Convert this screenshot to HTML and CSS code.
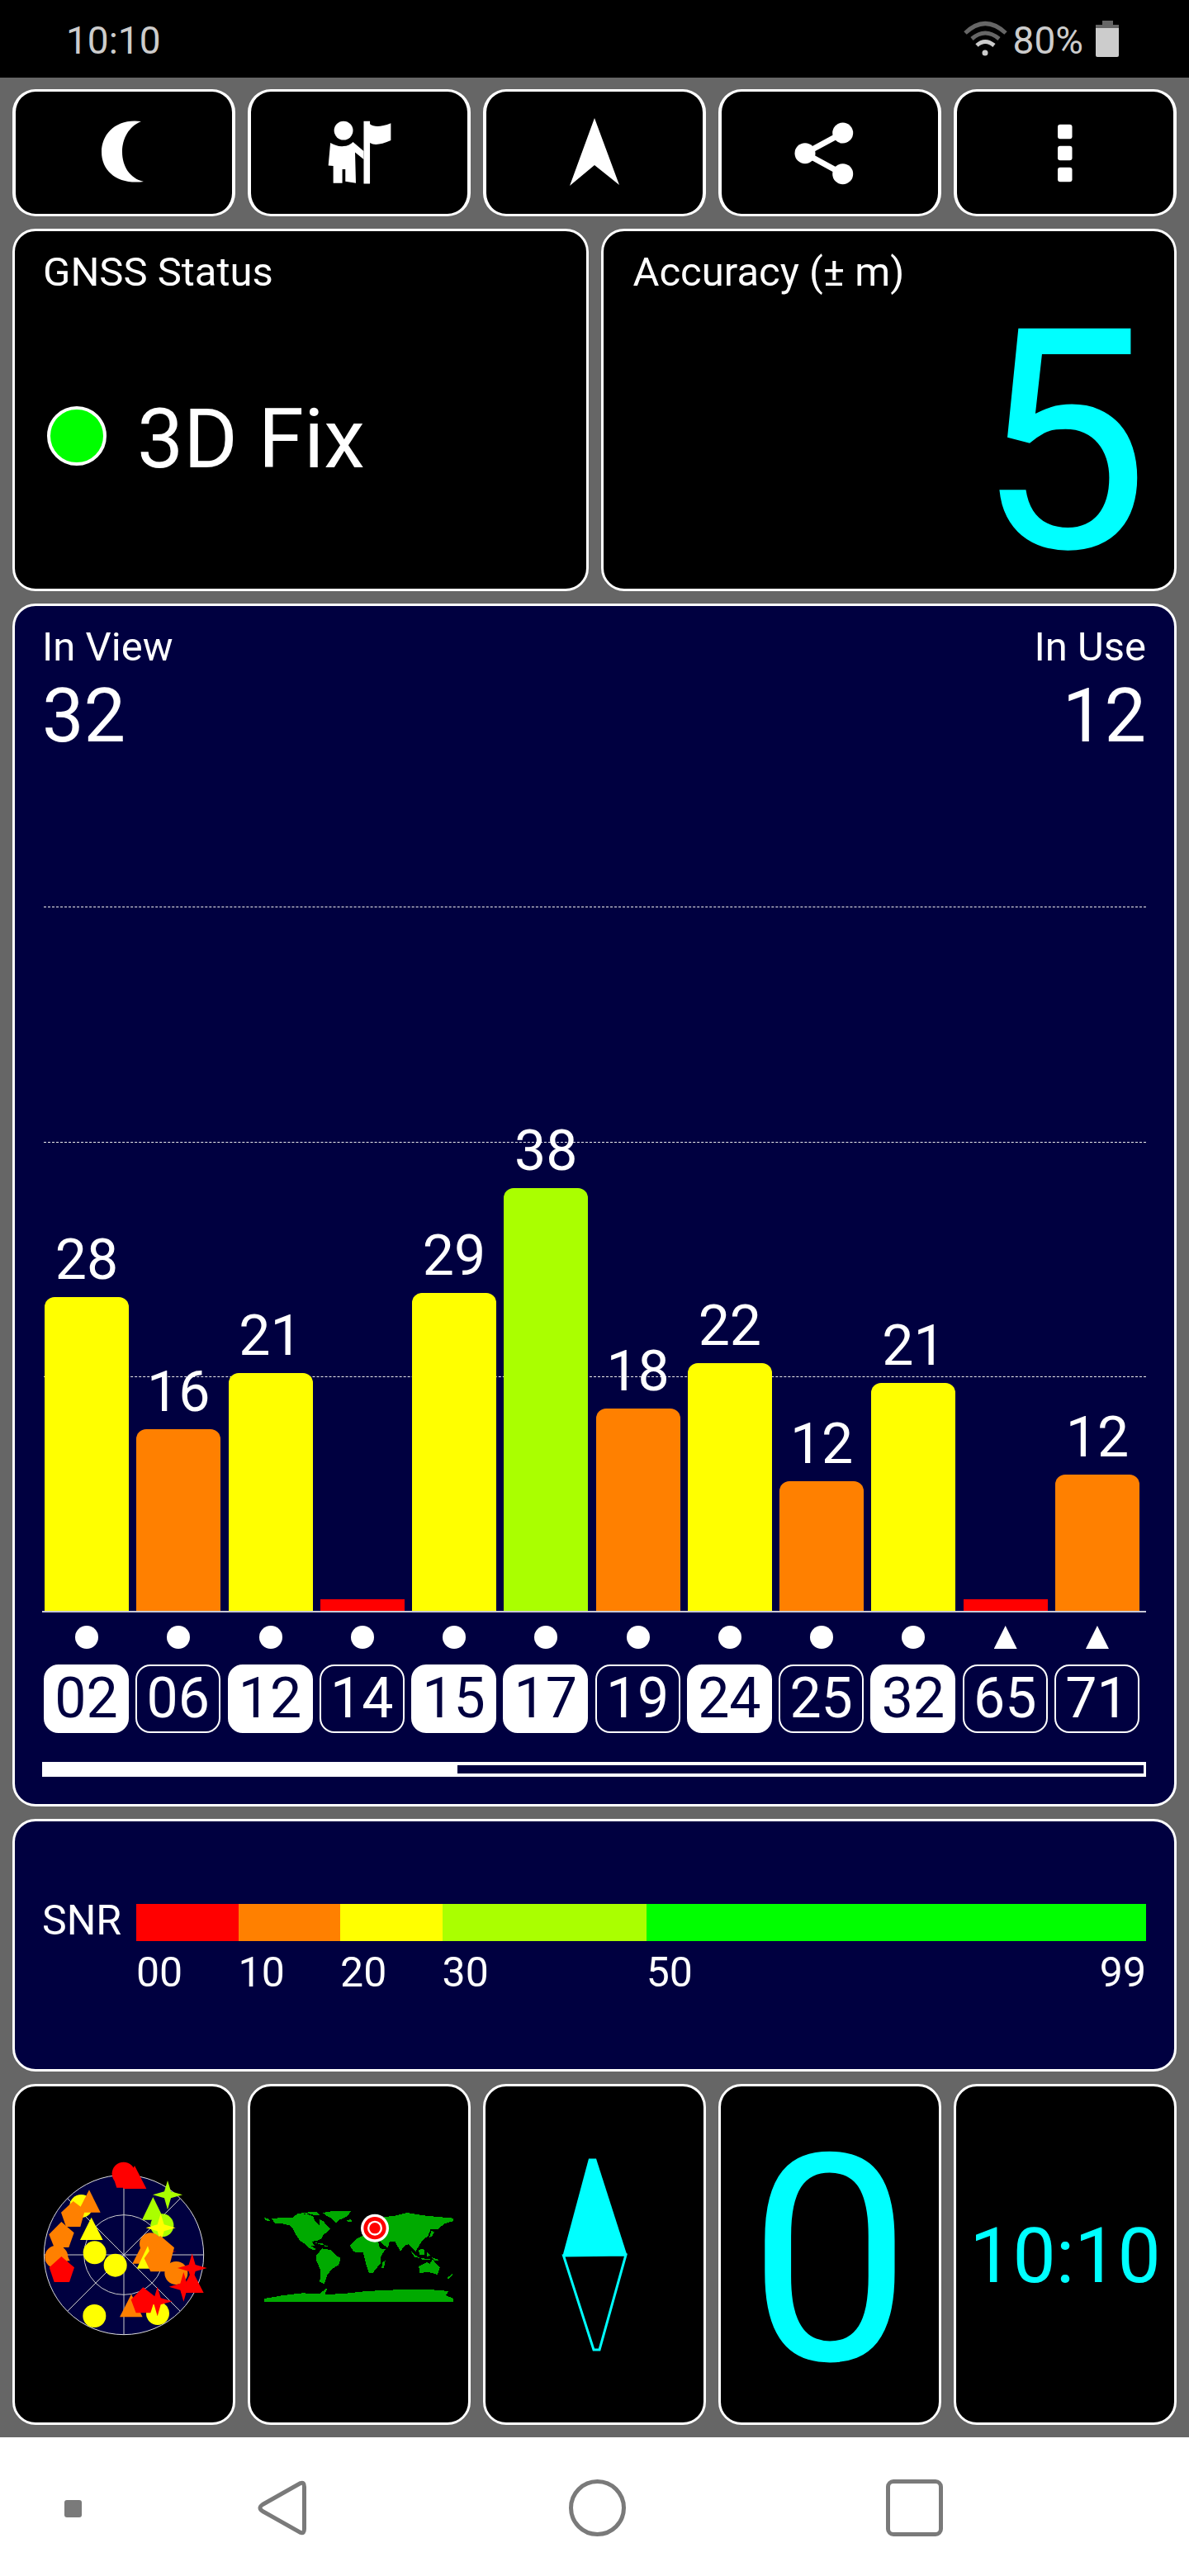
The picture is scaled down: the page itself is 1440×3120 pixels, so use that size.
FILE: index.html
```html
<!DOCTYPE html>
<html lang="en">
<head>
<meta charset="utf-8">
<title>GPS Test</title>
<link rel="stylesheet" href="styles.css">
</head>
<body>
<header class="statusbar">
  <span class="clock">10:10</span>
  <div class="status-right">
    <svg class="wifi" viewBox="0 0 53 43"><path class="wifi-dim" d="M2 15Q26-8 51 15"/><path class="wifi-dim" d="M10 22Q26 8 43 22"/><path class="wifi-lit" d="M16 30Q26 21 37 30"/><circle class="wifi-dot" cx="26" cy="39" r="3.5"/></svg>
    <span class="pct">80%</span>
    <div class="battery"><div class="battery-nub"></div><div class="battery-gap"></div><div class="battery-charge"></div></div>
  </div>
</header>

<main class="app">
  <section class="toolbar">
    <div class="card btn"><svg class="fill" viewBox="19 111 262 148"><path d="M171 147C141 143 123 162 123 184C123 208 143 224 174 220C157 216 148 201 148 184C148 168 156 153 171 147Z"/></svg></div>
    <div class="card btn"><svg class="fill" viewBox="303 111 263 148"><ellipse cx="415.500" cy="158" rx="11.500" ry="11.500"/><path d="M399.500 173Q408 178 415.500 177Q422 177 427 172L440 183V193L429.500 184.500L430.500 222L417.700 220V205H414V222H403V201L397 200.500Z"/><path d="M440 146.500H447.600V150Q455 156 473 149V170Q455 178 447.600 173V222.700H440Z"/></svg></div>
    <div class="card btn"><svg class="fill" viewBox="589 111 262 148"><path d="M720 143L750 224L720 200L690 225Z"/></svg></div>
    <div class="card btn"><svg class="fill" viewBox="874 111 262 148"><ellipse cx="1020.700" cy="161" rx="12.500" ry="12.500"/><ellipse cx="975" cy="185.700" rx="12.500" ry="12.500"/><ellipse cx="1020.700" cy="210.700" rx="12.500" ry="12.500"/><path class="share-line" d="M1020.700 161L975 185.700L1020.700 210.700"/></svg></div>
    <div class="card btn"><svg class="fill" viewBox="1159 111 262 148"><rect x="1281" y="150.700" width="17.500" height="17.500" rx="3"/><rect x="1281" y="176.700" width="17.500" height="17.500" rx="3"/><rect x="1281" y="202.700" width="17.500" height="17.500" rx="3"/></svg></div>
  </section>

  <section class="duo">
    <div class="card panel">
      <div class="label">GNSS Status</div>
      <div class="fix"><span class="fix-dot"></span><span class="fix-text">3D Fix</span></div>
    </div>
    <div class="card panel panel-accuracy">
      <div class="label">Accuracy (± m)</div>
      <div class="big-five">5</div>
    </div>
  </section>

  <section class="card navy sats">
    <div class="sats-head">
      <div><div class="label">In View</div><div class="count">32</div></div>
      <div class="align-end"><div class="label">In Use</div><div class="count">12</div></div>
    </div>
    <div class="chart">
      <div class="gridlines"><div class="gridline"></div><div class="gridline"></div><div class="gridline"></div></div>
      <div class="col"><span class="val">28</span><div class="bar yellow" style="height:380px"></div></div>
      <div class="col"><span class="val">16</span><div class="bar orange" style="height:220px"></div></div>
      <div class="col"><span class="val">21</span><div class="bar yellow" style="height:288px"></div></div>
      <div class="col"><div class="bar red flat" style="height:14px"></div></div>
      <div class="col"><span class="val">29</span><div class="bar yellow" style="height:385px"></div></div>
      <div class="col"><span class="val">38</span><div class="bar lime" style="height:512px"></div></div>
      <div class="col"><span class="val">18</span><div class="bar orange" style="height:245px"></div></div>
      <div class="col"><span class="val">22</span><div class="bar yellow" style="height:300px"></div></div>
      <div class="col"><span class="val">12</span><div class="bar orange" style="height:157px"></div></div>
      <div class="col"><span class="val">21</span><div class="bar yellow" style="height:276px"></div></div>
      <div class="col"><div class="bar red flat" style="height:14px"></div></div>
      <div class="col"><span class="val">12</span><div class="bar orange" style="height:165px"></div></div>
    </div>
    <div class="markers">
      <div class="mark"><span class="dot"></span></div><div class="mark"><span class="dot"></span></div><div class="mark"><span class="dot"></span></div><div class="mark"><span class="dot"></span></div>
      <div class="mark"><span class="dot"></span></div><div class="mark"><span class="dot"></span></div><div class="mark"><span class="dot"></span></div><div class="mark"><span class="dot"></span></div>
      <div class="mark"><span class="dot"></span></div><div class="mark"><span class="dot"></span></div><div class="mark"><span class="tri"></span></div><div class="mark"><span class="tri"></span></div>
    </div>
    <div class="chips">
      <span class="chip on">02</span><span class="chip">06</span><span class="chip on">12</span><span class="chip">14</span>
      <span class="chip on">15</span><span class="chip on">17</span><span class="chip">19</span><span class="chip on">24</span>
      <span class="chip">25</span><span class="chip on">32</span><span class="chip">65</span><span class="chip">71</span>
    </div>
    <div class="progress"><div class="progress-fill"></div></div>
  </section>

  <section class="card navy snr">
    <div class="snr-row">
      <div class="snr-name">SNR</div>
      <div class="scale">
        <div class="red"></div><div class="orange"></div><div class="yellow"></div><div class="lime"></div><div class="green"></div>
      </div>
    </div>
    <div class="snr-row">
      <div></div>
      <div class="scale ticks">
        <span>00</span><span>10</span><span>20</span><span>30</span><span class="tick-last"><span>50</span><span>99</span></span>
      </div>
    </div>
  </section>

  <section class="tiles">
    <div class="card tile">
      <svg class="skyplot" viewBox="-2 32 720 720">
        <circle class="sky-bg" cx="358" cy="392" r="290"/>
        <circle class="sky-line" cx="358" cy="392" r="145"/>
        <path class="sky-line" d="M358 102V682M68 392H648M153 187L563 597M153 597L563 187"/>
        <circle class="c-y" cx="203" cy="215" r="42"/>
        <path class="c-o" d="M232 156L273 238H190Z"/>
        <path class="c-o" d="M174 197L217 229L200 290H148L130 238Z"/>
        <path class="c-o" d="M131 272L177 312L158 365H105L86 318Z"/>
        <circle class="c-o" cx="113" cy="400" r="42"/>
        <path class="c-o" d="M125 340L162 414H100Z"/>
        <path class="c-r" d="M131 398L178 438L160 491H105L87 438Z"/>
        <path class="c-y" d="M240 256L282 338H199Z"/>
        <circle class="c-y" cx="252" cy="384" r="42"/>
        <circle class="c-y" cx="327" cy="430" r="42"/>
        <circle class="c-r" cx="357" cy="97" r="42"/>
        <path class="c-r" d="M358 55L400 85L385 148H332L315 95Z"/>
        <path class="c-r" d="M397 68L440 152H355Z"/>
        <path class="c-l" d="M464 182L505 265H424Z"/>
        <circle class="c-l" cx="497" cy="285" r="42"/>
        <path class="c-l" d="M517 122L529 162L571 174L529 186L517 228L505 186L463 174L505 162Z"/>
        <path class="c-y" d="M492 242L504 282L546 294L504 306L492 348L480 306L438 294L480 282Z"/>
        <path class="c-r" d="M445 370L550 380L445 390Z"/>
        <path class="c-o" d="M432 340L472 424H389Z"/>
        <circle class="c-o" cx="455" cy="352" r="40"/>
        <path class="c-y" d="M445 360L470 442H405Z"/>
        <path class="c-o" d="M490 322L541 366L518 453H455L432 405Z"/>
        <circle class="c-o" cx="548" cy="458" r="42"/>
        <path class="c-r" d="M606 387L618 428L660 440L618 452L606 495L594 452L553 440L594 428Z"/>
        <path class="c-r" d="M606 448L648 530H565Z"/>
        <path class="c-r" d="M575 455L587 496L628 508L587 520L575 562L563 520L522 508L563 496Z"/>
        <path class="c-o" d="M385 535L426 618H343Z"/>
        <circle class="c-y" cx="481" cy="605" r="42"/>
        <path class="c-r" d="M428 510L473 545L455 603H402L384 555Z"/>
        <path class="c-r" d="M480 508L492 549L534 561L492 573L480 615L468 573L427 561L468 549Z"/>
        <circle class="c-y" cx="251" cy="614" r="42"/>
      </svg>
    </div>
    <div class="card tile">
      <svg class="worldmap" viewBox="60 111 690 333">
        <g class="land">
          <path d="M60 138L78 143L80 150L66 148Z"/>
          <path d="M88 142L120 138L165 137L175 128L215 124L240 135L242 148L262 168L262 145L275 150L285 165L300 180L290 190L275 200L268 215L250 222L232 225L245 240L225 240L205 232L190 222L175 200L162 175L150 165L125 160L100 160Z"/>
          <path d="M170 126L205 120L225 118L250 116L262 130L240 128L215 122L185 130Z"/>
          <path d="M272 120L310 114L375 115L362 133L335 145L320 157L305 140L285 130Z"/>
          <path d="M360 146L376 145L378 152L364 153Z"/>
          <path d="M205 232L225 238L248 252L240 256L220 246Z"/>
          <path d="M245 229L270 231L280 238L262 235ZM280 238L292 240L290 244L280 242Z"/>
          <path d="M250 275L270 250L300 255L320 275L338 285L330 310L305 325L290 345L278 378L262 372L265 330L250 295Z"/>
          <path d="M372 240L395 215L425 200L470 205L480 250L502 252L485 275L482 305L455 338L440 338L428 300L420 265L385 262Z"/>
          <path d="M490 300L500 295L495 320L487 320Z"/>
          <path d="M420 190L420 160L500 135L540 130L580 120L640 130L690 135L748 140L748 150L715 160L690 180L665 180L655 205L640 215L625 235L610 262L600 250L585 235L570 240L555 260L535 225L515 225L510 248L490 235L475 215L440 205Z"/>
          <path d="M668 185L678 190L670 205L660 210Z"/>
          <path d="M590 255L610 275L625 285L605 280ZM620 255L640 250L642 272L625 272ZM650 262L665 275L650 280ZM630 285L665 290L635 292Z"/>
          <path d="M664 280L695 292L680 295Z"/>
          <path d="M622 315L650 300L662 305L672 290L698 320L690 345L655 335L625 340Z"/>
          <path d="M725 357L745 340L742 350L730 360Z"/>
          <path d="M60 432L130 420L200 412L260 415L290 392L280 418L370 412L430 405L540 400L650 398L730 405L720 420L748 432V444H60Z"/>
        </g>
        <circle class="t-w" cx="462" cy="176" r="51"/>
        <circle class="t-r" cx="462" cy="176" r="41"/>
        <circle class="t-w" cx="462" cy="176" r="27"/>
        <circle class="t-r" cx="462" cy="176" r="20"/>
      </svg>
    </div>
    <div class="card tile">
      <svg class="fill-cyan" viewBox="588 2527 264 407"><path class="needle-top" d="M713 2614.500H722L759 2730L681.500 2732Z"/><path class="needle-bottom" d="M682.500 2732L758 2731L726 2846H719Z"/></svg>
    </div>
    <div class="card tile tile-center"><span class="big-zero">0</span></div>
    <div class="card tile tile-center"><span class="tile-clock">10:10</span></div>
  </section>
</main>

<footer class="navbar">
  <span class="nav-dot"></span>
  <svg class="nav-back" viewBox="0 0 61 69"><path d="M54 4.500L8 30.500Q2 34.500 8 38.500L54 64.500Q58.500 66 58.500 60V9Q58.500 3 54 4.500Z"/></svg>
  <span class="nav-home"></span>
  <span class="nav-recent"></span>
</footer>
</body>
</html>
```
FILE: styles.css
```css
* { box-sizing: border-box; }
html, body { margin: 0; padding: 0; }
body {
  width: 1440px;
  height: 3120px;
  background: #666;
  font-family: Roboto, "Liberation Sans", sans-serif;
  color: #fff;
}

/* status bar */
.statusbar {
  height: 94px;
  background: #000;
  color: #ccc;
  display: flex;
  justify-content: space-between;
  align-items: flex-start;
  padding: 26px 85px 0 80px;
  font-size: 46px;
  line-height: 46px;
}
.status-right { display: flex; align-items: flex-start; }
.wifi { width: 53px; height: 43px; margin-top: -1px; margin-right: 7px; fill: none; stroke-width: 5; }
.wifi-dim { stroke: #666; }
.wifi-lit { stroke: #ccc; }
.wifi-dot { fill: #ccc; stroke: none; }
.pct { margin-right: 15px; }
.battery { width: 28px; margin-top: -1px; display: flex; flex-direction: column; align-items: center; }
.battery-nub { width: 13px; height: 5px; background: #666; }
.battery-gap { width: 28px; height: 4px; background: #666; }
.battery-charge { width: 28px; height: 35px; background: #ccc; border-radius: 0 0 2px 2px; }

/* layout */
.app { padding: 14px 15px 15px; display: flex; flex-direction: column; gap: 15px; }
.card { border: 3px solid #fff; border-radius: 28px; background: #000; }
.navy { background: #000040; }
.toolbar { display: grid; grid-template-columns: repeat(5, 1fr); gap: 15px; height: 153.500px; }
.btn { border-width: 3px 4px; }
.btn svg { display: block; width: 100%; height: 100%; }
.fill { fill: #fff; }
.share-line { fill: none; stroke: #fff; stroke-width: 7; }

.duo { display: grid; grid-template-columns: 1fr 1fr; gap: 15px; height: 439.500px; }
.panel { padding: 20px 34px 0; }
.panel-accuracy { padding: 20px 0 0 36px; }
.label { font-size: 49px; line-height: 60px; }
.fix { display: flex; align-items: center; margin-top: 125px; }
.fix-dot { width: 72px; height: 72px; margin-left: 5px; border: 4px solid #fff; border-radius: 50%; background: #0f0; }
.fix-text { font-size: 100px; line-height: 80px; margin: 7px 0 0 37px; }
.big-five { font-size: 373px; line-height: 340px; color: #0ff; text-align: right; margin-top: 6px; padding-right: 30px; }

/* satellites */
.sats { height: 1457px; padding: 20px 34px 0 33px; }
.sats-head { display: flex; justify-content: space-between; }
.align-end { text-align: right; }
.count { font-size: 90px; line-height: 90px; margin-top: 9px; }
.chart {
  position: relative;
  height: 855px;
  margin-top: 185px;
  padding: 0 8px 0 3px;
  border-bottom: 2px solid #c8c8d8;
  display: flex;
  justify-content: space-between;
  align-items: flex-end;
}
.gridlines { position: absolute; left: 2px; right: 0; top: 0; display: flex; flex-direction: column; }
.gridline { height: 284.500px; border-top: 1px dashed #eee; }
.col { position: relative; width: 102px; display: flex; flex-direction: column; align-items: center; }
.val { font-size: 68px; line-height: 68px; margin-bottom: 11px; }
.bar { width: 102px; border-radius: 12px 12px 0 0; }
.bar.flat { border-radius: 0; }
.red { background: #f00; }
.orange { background: #ff8000; }
.yellow { background: #ff0; }
.lime { background: #af0; }
.green { background: #0f0; }
.markers { display: flex; justify-content: space-between; padding: 0 8px 0 3px; margin-top: 16px; }
.mark { width: 102px; height: 28px; display: flex; justify-content: center; }
.dot { width: 28px; height: 28px; border-radius: 50%; background: #fff; }
.tri { width: 28px; height: 28px; background: #fff; clip-path: polygon(50% 0, 100% 100%, 0 100%); }
.chips { display: flex; justify-content: space-between; padding: 0 8px 0 2px; margin-top: 19px; }
.chip {
  width: 103px;
  height: 83px;
  border: 2px solid #fff;
  border-radius: 18px;
  display: flex;
  align-items: center;
  justify-content: center;
  font-size: 68px;
  line-height: 79px;
}
.chip.on { background: #fff; color: #000040; }
.progress { height: 18px; margin-top: 35px; border: solid #fff; border-width: 4px 3px; }
.progress-fill { width: 37.600%; height: 100%; background: #fff; }

/* SNR */
.snr { height: 306px; padding: 100px 34px 0 33px; }
.snr-row { display: grid; grid-template-columns: 114px 1fr; }
.snr-name { font-size: 50px; line-height: 40px; height: 45px; }
.scale { display: grid; grid-template-columns: 10fr 10fr 10fr 20fr 49fr; height: 45px; }
.ticks { height: auto; margin-top: 8px; font-size: 50px; line-height: 60px; }
.tick-last { display: flex; justify-content: space-between; }

/* tiles */
.tiles { display: grid; grid-template-columns: repeat(5, 1fr); gap: 15px; height: 413px; }
.tile { display: flex; align-items: center; justify-content: center; }
.tile-center { color: #0ff; }
.skyplot { width: 240px; height: 240px; flex: none; }
.sky-bg { fill: #000040; stroke: #ddd; stroke-width: 3; }
.sky-line { fill: none; stroke: #ccc; stroke-width: 3; }
.c-y { fill: #ff0; }
.c-o { fill: #ff8000; }
.c-r { fill: #f00; }
.c-l { fill: #af0; }
.worldmap { width: 230px; height: 111px; flex: none; margin-top: 4px; }
.land { fill: #00aa00; shape-rendering: crispEdges; }
.t-w { fill: #fff; }
.t-r { fill: #f00; }
.fill-cyan { width: 100%; height: 100%; }
.needle-top { fill: #0ff; }
.needle-bottom { fill: none; stroke: #0ff; stroke-width: 3; }
.big-zero { font-size: 350px; line-height: 350px; padding-top: 14px; }
.tile-clock { font-size: 93px; line-height: 93px; padding-top: 4px; }

/* nav bar */
.navbar { height: 168px; background: #fff; display: flex; align-items: center; padding-left: 78px; }
.nav-dot { width: 21px; height: 21px; border-radius: 3px; background: #7a7a7a; margin-top: 4px; }
.nav-back { width: 61px; height: 69px; margin-left: 211px; fill: none; stroke: #7a7a7a; stroke-width: 5; margin-top: 3px; }
.nav-home { width: 69px; height: 69px; margin-left: 318px; border: 5px solid #7a7a7a; border-radius: 50%; margin-top: 3px; }
.nav-recent { width: 69px; height: 69px; margin-left: 315px; border: 5px solid #7a7a7a; border-radius: 9px; margin-top: 3px; }
```
